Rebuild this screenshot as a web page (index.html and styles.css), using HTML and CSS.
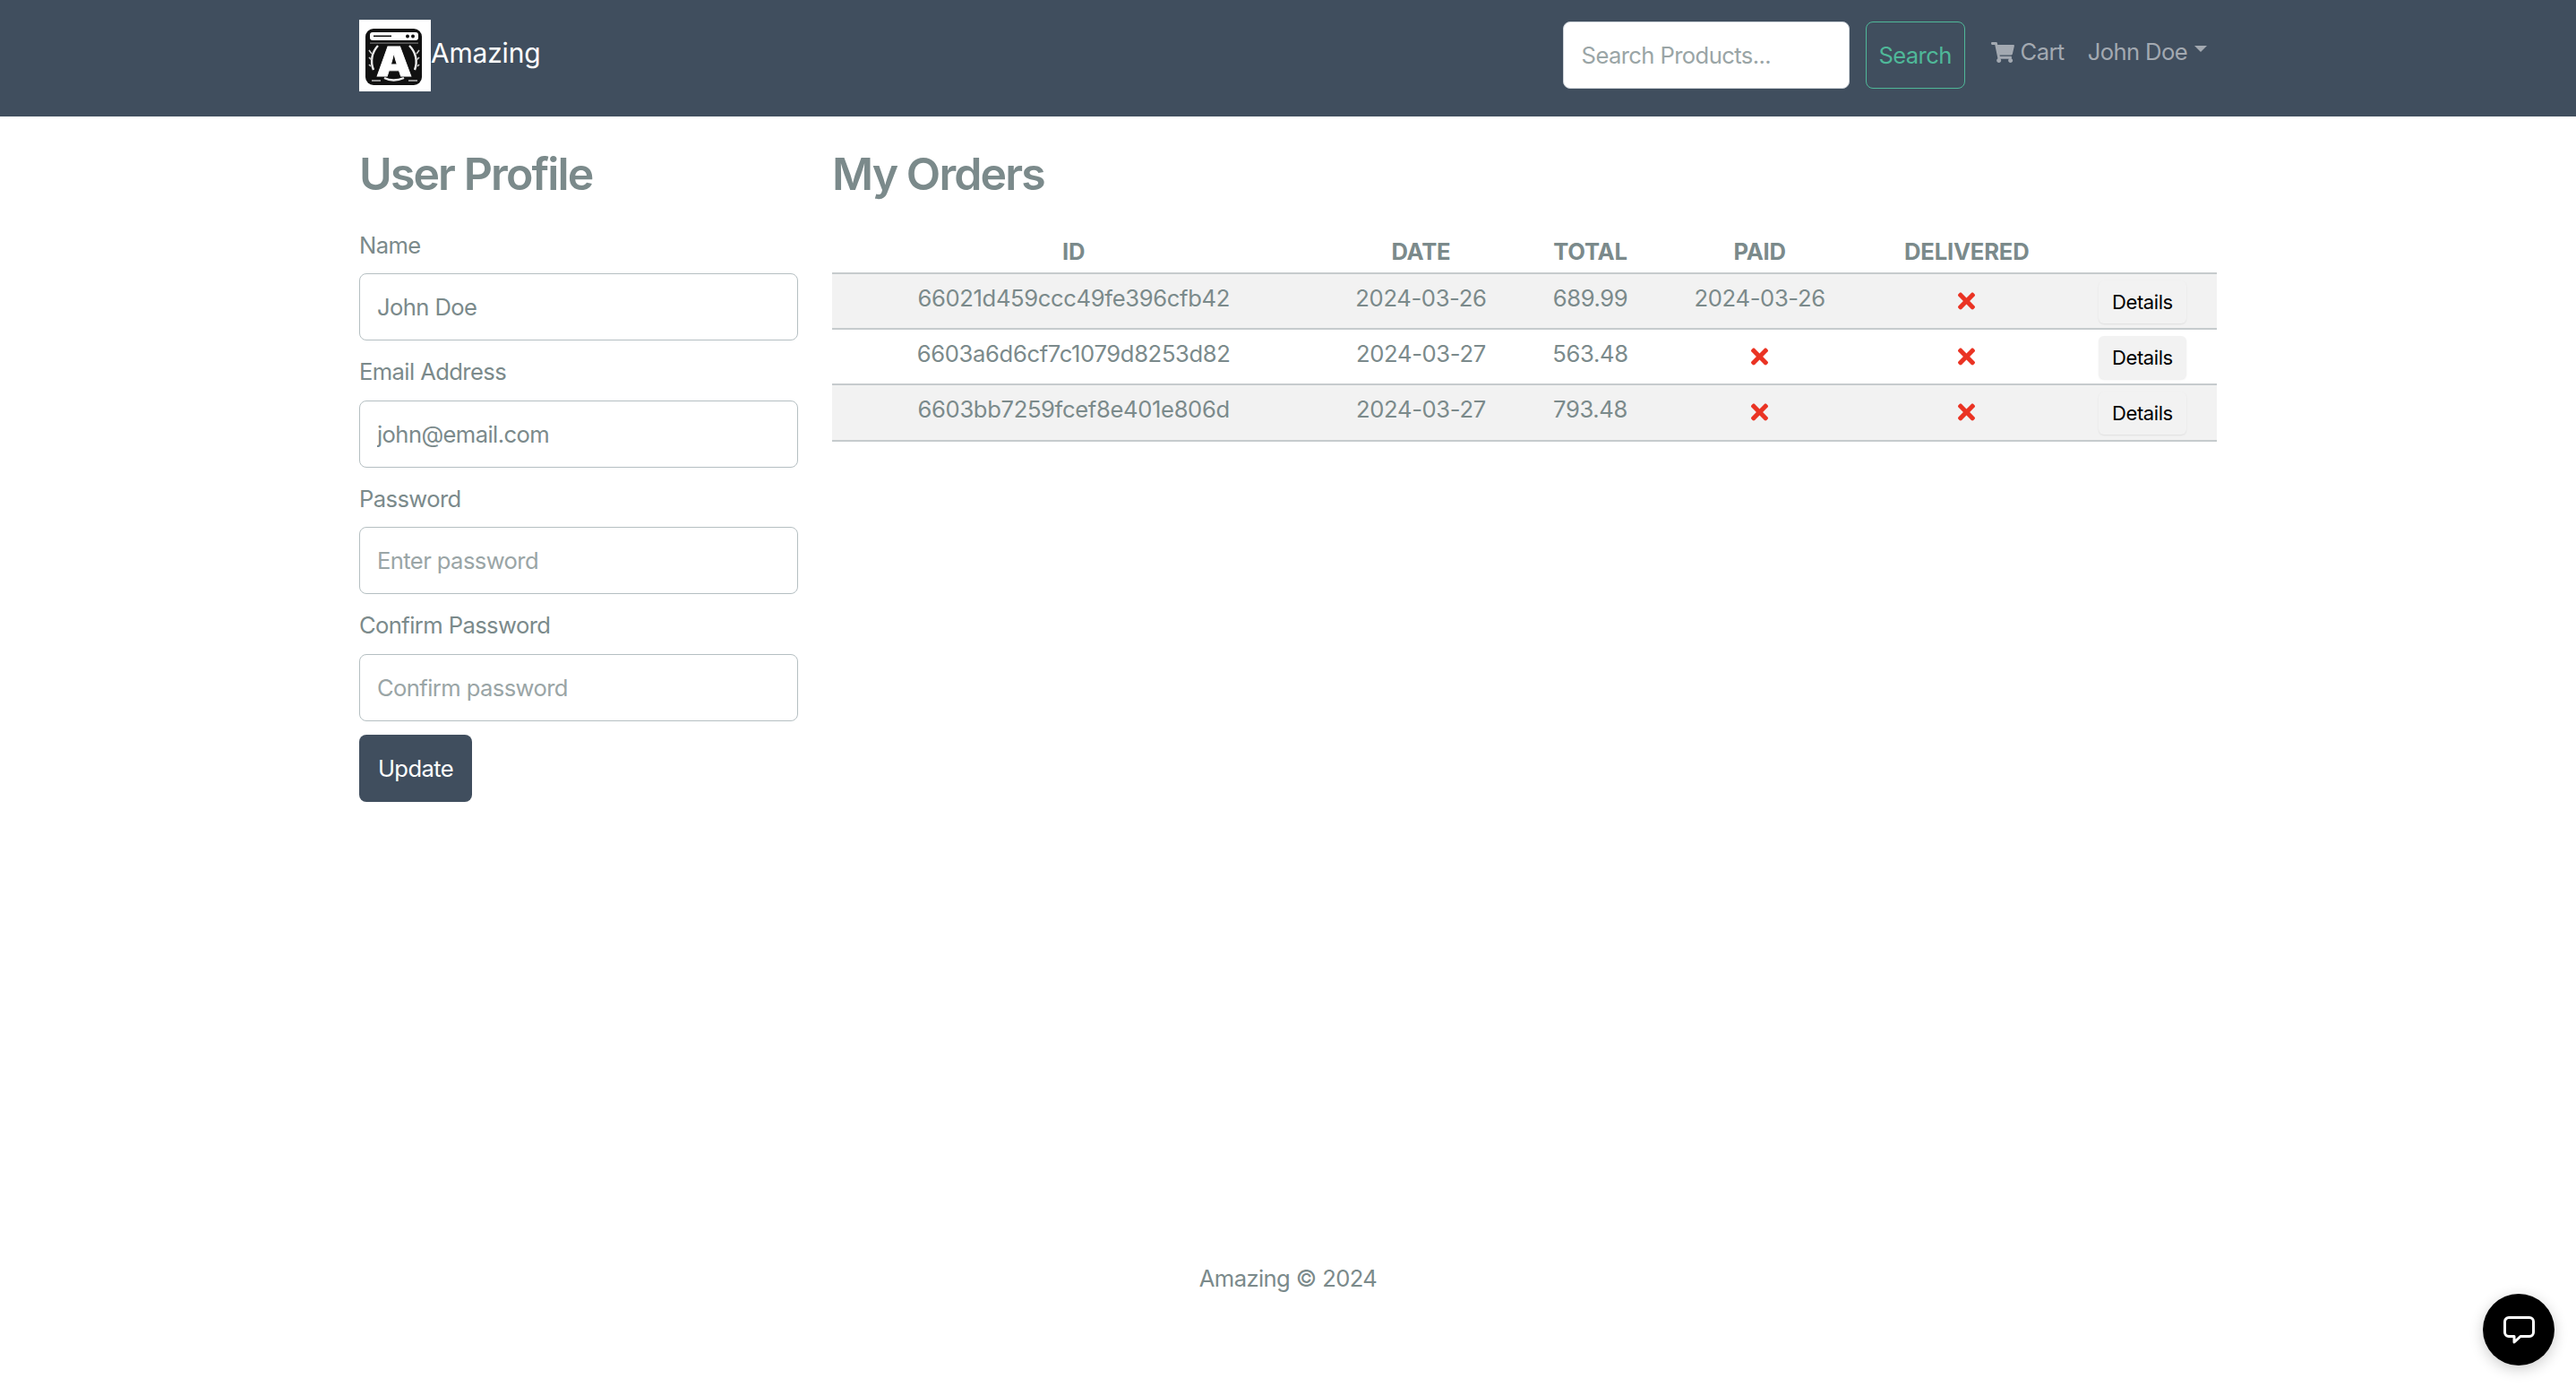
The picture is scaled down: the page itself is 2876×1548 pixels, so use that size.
FILE: index.html
```html
<!DOCTYPE html>
<html lang="en">
<head>
<meta charset="utf-8">
<title>Amazing</title>
<link rel="stylesheet" href="styles.css">
</head>
<body>
<div class="page">
  <header class="navbar">
    <div class="nav-inner">
      <a class="brand">
        <svg class="logo" viewBox="0 0 80 80" aria-hidden="true">
          <rect width="80" height="80" fill="#fff"/>
          <rect x="7" y="10" width="63" height="63" rx="9" fill="#111"/>
          <rect x="12" y="14" width="54" height="9" rx="3" fill="#fff"/>
          <rect x="16" y="17.5" width="20" height="1.6" fill="#111"/>
          <circle cx="54" cy="18.5" r="2" fill="#111"/>
          <circle cx="60" cy="18.5" r="2" fill="#111"/>
          <rect x="12" y="25.5" width="54" height="1.2" fill="#777"/>
          <path d="M21 29 A25 25 0 0 0 16 56 M56 29 A25 25 0 0 1 62 56" fill="none" stroke="#eee" stroke-width="2.4"/>
          <path d="M11 34 l3 4 M11 42 l3 3 M11 50 l2 2 M67 34 l-3 4 M67 42 l-3 3 M67 50 l-2 2" stroke="#ccc" stroke-width="1.6"/>
          <path d="M28 65 Q38 70 50 65" fill="none" stroke="#eee" stroke-width="2.4"/>
          <path d="M14 68 h10 M55 68 h10" stroke="#bbb" stroke-width="1.6"/>
          <text class="logo-a" x="19" y="63" textLength="40" lengthAdjust="spacingAndGlyphs">A</text>
        </svg>
        <span class="brand-name">Amazing</span>
      </a>
      <nav class="nav-right">
        <form class="search">
          <input class="search-input" type="text" placeholder="Search Products...">
          <button class="search-btn" type="button">Search</button>
        </form>
        <a class="nav-link cart">
          <svg class="cart-icon" viewBox="0 0 576 512" aria-hidden="true"><path d="M528.12 301.319l47.273-208C578.806 78.301 567.391 64 551.99 64H159.208l-9.166-44.81C147.758 8.021 137.93 0 126.529 0H24C10.745 0 0 10.745 0 24v16c0 13.255 10.745 24 24 24h69.883l70.248 343.435C147.325 417.1 136 435.222 136 456c0 30.928 25.072 56 56 56s56-25.072 56-56c0-15.674-6.447-29.835-16.824-40h209.647C430.447 426.165 424 440.326 424 456c0 30.928 25.072 56 56 56s56-25.072 56-56c0-22.172-12.888-41.332-31.579-50.405l5.517-24.276c3.413-15.018-8.002-29.319-23.403-29.319H218.117l-6.545-32h293.145c11.206 0 20.92-7.754 23.403-18.681z"/></svg>
          <span>Cart</span>
        </a>
        <a class="nav-link user"><span>John Doe</span><i class="caret"></i></a>
      </nav>
    </div>
  </header>

  <main class="content">
    <section class="profile">
      <h2 class="title">User Profile</h2>
      <form>
        <div class="group"><label class="label">Name</label><input class="input" type="text" value="John Doe"></div>
        <div class="group"><label class="label">Email Address</label><input class="input" type="email" value="john@email.com"></div>
        <div class="group"><label class="label">Password</label><input class="input" type="password" placeholder="Enter password"></div>
        <div class="group"><label class="label">Confirm Password</label><input class="input" type="password" placeholder="Confirm password"></div>
        <button class="update" type="button">Update</button>
      </form>
    </section>
    <section class="orders">
      <h2 class="title">My Orders</h2>
      <table class="table">
        <colgroup>
          <col class="c-id"><col class="c-date"><col class="c-total"><col class="c-paid"><col class="c-del"><col class="c-act">
        </colgroup>
        <thead>
          <tr><th>ID</th><th>DATE</th><th>TOTAL</th><th>PAID</th><th>DELIVERED</th><th></th></tr>
        </thead>
        <tbody>
          <tr class="odd">
            <td>66021d459ccc49fe396cfb42</td><td>2024-03-26</td><td>689.99</td><td>2024-03-26</td>
            <td><svg class="x" viewBox="0 80 352 352" aria-hidden="true"><path d="M242.72 256l100.07-100.07c12.28-12.28 12.28-32.19 0-44.48l-22.24-22.24c-12.28-12.28-32.19-12.28-44.48 0L176 189.28 75.93 89.21c-12.28-12.28-32.19-12.28-44.48 0L9.21 111.45c-12.28 12.28-12.28 32.19 0 44.48L109.28 256 9.21 356.07c-12.28 12.28-12.28 32.19 0 44.48l22.24 22.24c12.28 12.28 32.2 12.28 44.48 0L176 322.72l100.07 100.07c12.28 12.28 32.2 12.28 44.48 0l22.24-22.24c12.28-12.28 12.28-32.19 0-44.48L242.72 256z"/></svg></td>
            <td><button class="details" type="button">Details</button></td>
          </tr>
          <tr>
            <td>6603a6d6cf7c1079d8253d82</td><td>2024-03-27</td><td>563.48</td>
            <td><svg class="x" viewBox="0 80 352 352" aria-hidden="true"><path d="M242.72 256l100.07-100.07c12.28-12.28 12.28-32.19 0-44.48l-22.24-22.24c-12.28-12.28-32.19-12.28-44.48 0L176 189.28 75.93 89.21c-12.28-12.28-32.19-12.28-44.48 0L9.21 111.45c-12.28 12.28-12.28 32.19 0 44.48L109.28 256 9.21 356.07c-12.28 12.28-12.28 32.19 0 44.48l22.24 22.24c12.28 12.28 32.2 12.28 44.48 0L176 322.72l100.07 100.07c12.28 12.28 32.2 12.28 44.48 0l22.24-22.24c12.28-12.28 12.28-32.19 0-44.48L242.72 256z"/></svg></td>
            <td><svg class="x" viewBox="0 80 352 352" aria-hidden="true"><path d="M242.72 256l100.07-100.07c12.28-12.28 12.28-32.19 0-44.48l-22.24-22.24c-12.28-12.28-32.19-12.28-44.48 0L176 189.28 75.93 89.21c-12.28-12.28-32.19-12.28-44.48 0L9.21 111.45c-12.28 12.28-12.28 32.19 0 44.48L109.28 256 9.21 356.07c-12.28 12.28-12.28 32.19 0 44.48l22.24 22.24c12.28 12.28 32.2 12.28 44.48 0L176 322.72l100.07 100.07c12.28 12.28 32.2 12.28 44.48 0l22.24-22.24c12.28-12.28 12.28-32.19 0-44.48L242.72 256z"/></svg></td>
            <td><button class="details" type="button">Details</button></td>
          </tr>
          <tr class="odd">
            <td>6603bb7259fcef8e401e806d</td><td>2024-03-27</td><td>793.48</td>
            <td><svg class="x" viewBox="0 80 352 352" aria-hidden="true"><path d="M242.72 256l100.07-100.07c12.28-12.28 12.28-32.19 0-44.48l-22.24-22.24c-12.28-12.28-32.19-12.28-44.48 0L176 189.28 75.93 89.21c-12.28-12.28-32.19-12.28-44.48 0L9.21 111.45c-12.28 12.28-12.28 32.19 0 44.48L109.28 256 9.21 356.07c-12.28 12.28-12.28 32.19 0 44.48l22.24 22.24c12.28 12.28 32.2 12.28 44.48 0L176 322.72l100.07 100.07c12.28 12.28 32.2 12.28 44.48 0l22.24-22.24c12.28-12.28 12.28-32.19 0-44.48L242.72 256z"/></svg></td>
            <td><svg class="x" viewBox="0 80 352 352" aria-hidden="true"><path d="M242.72 256l100.07-100.07c12.28-12.28 12.28-32.19 0-44.48l-22.24-22.24c-12.28-12.28-32.19-12.28-44.48 0L176 189.28 75.93 89.21c-12.28-12.28-32.19-12.28-44.48 0L9.21 111.45c-12.28 12.28-12.28 32.19 0 44.48L109.28 256 9.21 356.07c-12.28 12.28-12.28 32.19 0 44.48l22.24 22.24c12.28 12.28 32.2 12.28 44.48 0L176 322.72l100.07 100.07c12.28 12.28 32.2 12.28 44.48 0l22.24-22.24c12.28-12.28 12.28-32.19 0-44.48L242.72 256z"/></svg></td>
            <td><button class="details" type="button">Details</button></td>
          </tr>
        </tbody>
      </table>
    </section>
  </main>

  <footer class="footer">Amazing © 2024</footer>
</div>
<button class="chat" type="button" aria-label="Chat">
  <svg class="chat-icon" viewBox="0 0 35 31" aria-hidden="true"><path d="M6 1.5 H29 A4.5 4.5 0 0 1 33.5 6 V18 A4.5 4.5 0 0 1 29 22.5 H19 L12 29 V22.5 H6 A4.5 4.5 0 0 1 1.5 18 V6 A4.5 4.5 0 0 1 6 1.5 Z" fill="none" stroke="#fff" stroke-width="3" stroke-linejoin="round"/></svg>
</button>
</body>
</html>
```
FILE: styles.css
```css
* { box-sizing: border-box; }
html, body { margin: 0; padding: 0; }
body {
  font-family: Inter, "Liberation Sans", sans-serif;
  font-size: 25.6px;
  letter-spacing: -0.6px;
  color: #7b8a8b;
  background: #fff;
}
.page { min-height: 1548px; display: flex; flex-direction: column; }

.navbar { height: 130px; background: #404e5e; flex: none; }
.nav-inner {
  width: 2074px; margin: 0 auto; height: 100%;
  display: flex; align-items: center; justify-content: space-between;
  padding-right: 11px;
}
.brand { display: flex; align-items: center; }
.logo { width: 80px; height: 80px; display: block; margin-top: -6px; }
.logo-a { font-family: Inter, sans-serif; font-weight: 900; font-size: 46px; letter-spacing: 0; fill: #fff; stroke: #fff; stroke-width: 0.8px; }
.brand-name { color: #fff; font-size: 30px; margin-top: -12px; letter-spacing: -0.2px; }
.nav-right { display: flex; align-items: flex-start; height: 75px; margin-top: -7px; }
.search { display: flex; gap: 18px; }
.search-input {
  width: 320px; height: 75px; padding: 0 20px;
  background: #fff; border: 1px solid #ced4da; border-radius: 8px;
  font: inherit; letter-spacing: inherit; color: #7b8a8b; outline: none;
}
.search-input::placeholder, .input::placeholder { color: #9aa5a6; opacity: 1; }
.search-btn {
  width: 111px; height: 75px; padding: 0;
  background: transparent; border: 1px solid #4fb899; border-radius: 8px;
  font: inherit; letter-spacing: inherit; color: #4fb899;
}
.nav-link { color: #a3a9b1; display: flex; align-items: center; height: 66px; }
.cart { margin-left: 29px; }
.cart-icon { width: 26px; height: 23px; fill: #a3a9b1; margin-right: 7px; margin-top: 2px; }
.user { margin-left: 26px; }
.caret {
  width: 0; height: 0; margin-left: 8px; margin-top: -6px;
  border-left: 7px solid transparent; border-right: 7px solid transparent; border-top: 7px solid #a3a9b1;
}

.content { flex: 1; width: 2074px; margin: 0 auto; display: flex; gap: 38px; align-items: flex-start; }
.profile { width: 490px; flex: none; }
.orders { flex: 1; }
.title { margin: 0; padding-top: 34px; font-size: 50px; line-height: 60px; font-weight: 600; letter-spacing: -1.9px; height: 113px; color: #7b8a8b; }
.group { margin-bottom: 15px; }
.group:first-child { margin-top: 11px; }
.label { display: block; height: 40px; line-height: 40px; margin-bottom: 11.4px; }
.input {
  display: block; width: 100%; height: 75px; padding: 0 19px;
  background: #fff; border: 1px solid #b5bfc2; border-radius: 8px;
  font: inherit; letter-spacing: inherit; color: #7b8a8b; outline: none;
}
.update {
  display: block; width: 126px; height: 75px; padding: 0; margin-top: 15.5px;
  background: #404e5e; color: #fff; border: 0; border-radius: 8px;
  font: inherit; letter-spacing: inherit;
}

.table { width: 100%; border-collapse: collapse; table-layout: fixed; margin-top: 0; }
.c-id { width: 539px; } .c-date { width: 236px; } .c-total { width: 142px; }
.c-paid { width: 236px; } .c-del { width: 226px; } .c-act { width: 166px; }
.table th { height: 62px; padding: 18px 0 0; font-weight: 700; text-align: center; line-height: 40px; border-bottom: 2px solid #c6cbcd; vertical-align: top; letter-spacing: -0.2px; }
.table td { height: 62.2px; padding: 0; text-align: center; line-height: 40px; border-bottom: 2px solid #c6cbcd; vertical-align: top; padding-top: 6.5px; letter-spacing: -0.35px; }
.odd td { background: #f2f2f2; }
.x { width: 19px; height: 20px; fill: #ea3323; display: inline-block; vertical-align: top; margin-top: 13px; }
.details {
  width: 98px; height: 48px; padding: 0; margin-top: 0;
  background: #f2f2f2; color: #000; border: 0; border-radius: 6px;
  box-shadow: 0 1px 2px rgba(0,0,0,.08);
  font-family: inherit; font-size: 22px; letter-spacing: -0.4px;
}

.footer { height: 141px; text-align: center; line-height: 40px; flex: none; }
.chat {
  position: fixed; right: 24px; bottom: 24px; width: 80px; height: 80px;
  border-radius: 50%; border: 0; padding: 0; background: #000;
  display: flex; align-items: center; justify-content: center;
  box-shadow: 0 4px 16px rgba(0,0,0,.2);
}
.chat-icon { width: 35px; height: 31px; display: block; }
```
